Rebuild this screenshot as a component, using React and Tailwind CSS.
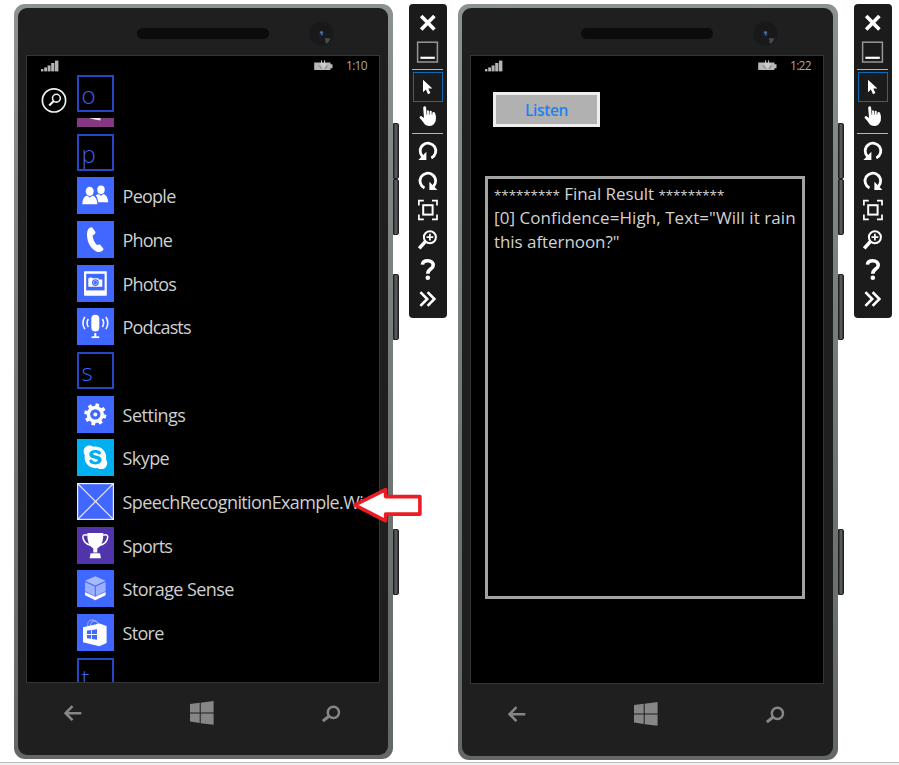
import React from "react";
import { FaSkype } from "react-icons/fa";

const BLUE = "#4067ff";

const icons = {
  people: (
    <g fill="#fff">
      <ellipse cx="24" cy="12.8" rx="3.7" ry="4.2" />
      <path d="M18.8 18.3 Q20.5 17 22 17.2 L24 18.8 L26.5 17 Q30.5 18 31.3 25.3 H21.2 Q20.8 20.5 18.8 18.3Z" />
      <ellipse cx="12.7" cy="14.3" rx="4" ry="4.6" />
      <path d="M5.3 27.3 Q5.6 19.5 10 18.6 L12.8 20.4 L15.6 18.6 Q20 19.5 20.3 27.3Z" />
    </g>
  ),
  phone: (
    <path fill="#fff" d="M11 8.5C12 6.8 14 6 15 6.2L18.5 11C18.7 12.5 17 14 15.6 14.5C15.8 18 17.5 21.5 20 24C21.5 23.3 22.5 23.3 23.2 23.7L26.6 28C26 30 23.5 31.3 21 31C15 29.5 10 22 10 14C10 12 10.2 10 11 8.5Z" />
  ),
  photos: (
    <g>
      <rect x="7" y="6.2" width="22.8" height="24.5" rx="0.8" fill="#fff" />
      <rect x="9.2" y="8.8" width="18.4" height="16.6" fill={BLUE} />
      <path d="M11.3 13.2H12.3V12.5H15V13.2H21.5V14.5H25.3V21.8H11.3Z" fill="#fff" />
      <circle cx="18.4" cy="17.6" r="3.4" fill={BLUE} />
      <circle cx="18.4" cy="17.6" r="2" fill="none" stroke="#b9c6ff" strokeWidth="0.8" />
    </g>
  ),
  podcasts: (
    <g fill="none" stroke="#fff" strokeWidth="1.5">
      <rect x="14.3" y="6.7" width="8" height="16.8" rx="4" fill="#fff" stroke="none" />
      <path d="M18.3 25V29" strokeWidth="2" />
      <path d="M14.6 29.2H22.2" strokeWidth="1.8" />
      <path d="M7.8 9Q4 15 7.8 21.2M11.3 11Q8.9 15 11.3 19.2M28.9 9Q32.7 15 28.9 21.2M25.4 11Q27.8 15 25.4 19.2" />
    </g>
  ),
  settings: (
    <g transform="translate(18.3 18.4)">
      <circle r="6.9" fill="none" stroke="#fff" strokeWidth="3.4" />
      <g fill="#fff">
        {[0, 45, 90, 135, 180, 225, 270, 315].map((a) => (
          <rect key={a} x="-1.9" y="-11" width="3.8" height="4" rx="0.6" transform={`rotate(${a + 12})`} />
        ))}
      </g>
      <circle r="2" fill="#fff" />
    </g>
  ),
  skype: <FaSkype x="4.9" y="4.8" size="27" color="#fff" />,
  speech: (
    <g fill="none" stroke="#e8ecff" strokeWidth="1.2">
      <path d="M0 0L37 37M37 0L0 37" />
      <rect x="0.6" y="0.6" width="35.8" height="35.8" />
    </g>
  ),
  sports: (
    <g fill="#fff">
      <path d="M10.3 6H26.3C26.3 14 25 18.5 20.3 21.5V25.5H16.3V21.5C11.6 18.5 10.3 14 10.3 6Z" />
      <path d="M13.6 26.3H23L24 31.2H12.6Z" />
      <path d="M10.5 8.2C7 7 5.4 8.2 6 11C7 15.5 10 17.5 13.5 18.2M26.1 8.2C29.6 7 31.2 8.2 30.6 11C29.6 15.5 26.6 17.5 23.1 18.2" fill="none" stroke="#fff" strokeWidth="1.5" />
    </g>
  ),
  storage: (
    <g>
      <path d="M18.3 6.3L28.6 10.8L18.3 15.5L8 10.8Z" fill="#a9b9ff" />
      <path d="M8 11.9L17.8 16.4V26L8 21.3Z" fill="#9db0ff" />
      <path d="M28.6 11.9L18.8 16.4V26L28.6 21.3Z" fill="#9db0ff" />
      <path d="M8 22L18.3 26.8L28.6 22V25.2L18.3 30.2L8 25.2Z" fill="#fff" />
    </g>
  ),
  store: (
    <g>
      <path d="M10.8 12C10 8 12.5 6 15 6C18 6 20.5 8 21 10.5M13.5 11.5C13.5 8.5 15.5 7 17.5 7C19.8 7 21.8 9 22 10.5" fill="none" stroke="#a9b9ff" strokeWidth="1" />
      <path d="M6 13.2L22.5 9.6L29.6 12V29L22.3 32.2L6 28.3Z" fill="#fff" />
      <path d="M10 16.6L14.2 16V20.1H10ZM15 15.9L20 15.2V20.1H15ZM10 20.9H14.2V24.8L10 24.3ZM15 20.9H20V25.7L15 25Z" fill={BLUE} />
    </g>
  ),
};

const rows = [
  { letter: "p" },
  { icon: "people", label: "People", cls: "tracking-[-0.75px]" },
  { icon: "phone", label: "Phone", cls: "tracking-[-0.9px]" },
  { icon: "photos", label: "Photos", cls: "tracking-[-0.85px]" },
  { icon: "podcasts", label: "Podcasts", cls: "tracking-[-0.85px]" },
  { letter: "s" },
  { icon: "settings", label: "Settings", cls: "tracking-[-0.5px]" },
  { icon: "skype", label: "Skype", bg: "bg-[#00aff0]", cls: "tracking-[-0.6px]" },
  { icon: "speech", label: "SpeechRecognitionExample.Wi", cls: "tracking-[-0.62px]" },
  { icon: "sports", label: "Sports", bg: "bg-[#5133ab]", cls: "tracking-[-0.75px]" },
  { icon: "storage", label: "Storage Sense", cls: "tracking-[-0.58px]" },
  { icon: "store", label: "Store", cls: "tracking-[-0.7px]" },
  { letter: "t" },
];

function LetterTile({ children }) {
  return (
    <div className="flex h-[37px] w-[37px] shrink-0 items-end border-2 border-[#2748c6] pb-[1px] pl-[3px] text-[24px] leading-[28px] font-light text-[#3a60f5]">
      {children}
    </div>
  );
}

function StatusBar({ time }) {
  return (
    <div className="flex h-[19px] shrink-0 items-center pr-[14px] pl-[14px]">
      <svg width="18" height="12" viewBox="0 0 18 12" fill="#b4b4b4">
        <rect x="0" y="9" width="2.4" height="2.4" />
        <rect x="3.2" y="7.4" width="2.8" height="4" />
        <rect x="6.6" y="5.4" width="3" height="6" />
        <rect x="10.2" y="3" width="3.2" height="8.4" />
        <rect x="14" y="0.6" width="3.4" height="10.8" />
      </svg>
      <svg className="mr-[13px] ml-auto" width="20" height="12" viewBox="0 0 20 12">
        <path d="M1.2 2.6H17.5V4.3H19.5V8.3H17.5V10H1.2Z" fill="#b8b8b8" />
        <path d="M6 5.5L8.6 8.5M12.4 8.8L14.2 5.5" stroke="#666" strokeWidth="0.8" />
        <path d="M8.6 0.3V3M11.6 0.3V3M7.5 3.5H12.8V5.5L10.2 8Z" stroke="#ccc" fill="#ccc" strokeWidth="1" />
      </svg>
      <span className="w-[19px] text-[12px] leading-[19px] tracking-[-0.7px] whitespace-nowrap text-[#a8a8a8]">{time}</span>
    </div>
  );
}

function SideButtons() {
  const b = "w-[6px] rounded-r-[2px] border border-[#202122] bg-linear-to-r from-[#2e2f31] via-[#67686c] to-[#2b2c2e]";
  return (
    <div className="flex w-[6px] flex-col">
      <div className={`mt-[119px] h-[56px] ${b}`} />
      <div className={`h-[56px] ${b}`} />
      <div className={`mt-[39px] h-[66px] ${b}`} />
      <div className={`mt-[189px] h-[66px] ${b}`} />
    </div>
  );
}

function Phone({ tall, time, children }) {
  return (
    <div className="flex">
      <div className={`flex flex-col rounded-[11px] bg-linear-to-b from-[#8b928f] via-[#747a77] to-[#636867] pt-[3.5px] pr-[5px] pb-[4px] pl-[4px] ${tall ? "h-[756px] w-[380px]" : "h-[755px] w-[379px]"}`}>
        <div className="flex min-h-0 flex-1 flex-col rounded-[9px] bg-[#1f1f1f]">
          <div className="flex h-[47.5px] shrink-0 items-center pt-[5px] pl-[119px]">
            <div className="h-[11px] w-[132px] rounded-full bg-[#0c0c0c]" />
            <svg className="ml-[40px]" width="25" height="25" viewBox="0 0 25 25">
              <circle cx="12.5" cy="12.5" r="12" fill="#18191b" />
              <path d="M16 17L21.5 17.5Q20 21.5 17 23Z" fill="#4b4c4e" />
              <circle cx="12.5" cy="12.5" r="3" fill="#172338" />
              <circle cx="12.5" cy="11.6" r="1.4" fill="#5f74b0" />
              <circle cx="12.8" cy="13.4" r="0.9" fill="#2b7a80" />
            </svg>
          </div>
          <div className={`ml-[8px] flex w-[354px] shrink-0 flex-col overflow-hidden border border-[#353535] bg-black ${tall ? "h-[629px]" : "h-[628px]"}`}>
            <StatusBar time={time} />
            {children}
          </div>
          <div className="flex h-[60px] shrink-0 items-center pl-[45.5px] text-[#868686]">
            <svg width="18" height="17" viewBox="0 0 18 17" fill="none" stroke="currentColor" strokeWidth="2.6">
              <path d="M17.3 8.2H2M8.5 1.2L1.6 8.2L8.5 15.2" />
            </svg>
            <svg className="ml-[108px]" width="24" height="24" viewBox="0 0 24 24" fill="currentColor">
              <path d="M0 3L9.7 1.8V11.5H0ZM10.7 1.7L23.6 0V11.5H10.7ZM0 12.5H9.7V22.1L0 20.6ZM10.7 12.5H23.6V23.8L10.7 22.2Z" />
            </svg>
            <svg className="ml-[107px]" width="20" height="19" viewBox="0 0 20 19" fill="none" stroke="currentColor" strokeWidth="2.4">
              <circle cx="12.4" cy="8.4" r="5.6" />
              <path d="M8.2 12L1.8 17.2" strokeWidth="3" />
            </svg>
          </div>
        </div>
      </div>
      <SideButtons />
    </div>
  );
}

function ToolCell({ children, active }) {
  return (
    <div className={`flex h-[29.6px] w-[30px] shrink-0 items-center justify-center ${active ? "border border-[#0b6cb4]" : ""}`}>
      <svg className="shrink-0" width="30" height="30" viewBox="0 0 30 30" fill="none" stroke="#fff">
        {children}
      </svg>
    </div>
  );
}

function Toolbar() {
  return (
    <div className="flex h-[314px] w-[37.5px] flex-col items-center rounded-[4px] bg-[#1b1b1b] pt-[4px]">
      <ToolCell><path d="M8.2 8L21.4 21.6M21.4 8L8.2 21.6" strokeWidth="3.6" /></ToolCell>
      <ToolCell>
        <rect x="4.6" y="5.2" width="19.8" height="19.8" stroke="#979797" strokeWidth="1.5" />
        <path d="M7.4 20.8H21.8" strokeWidth="2.2" />
      </ToolCell>
      <div className="mt-[1.5px] mb-[2.4px] h-px w-[31px] bg-[#b5b5b5]" />
      <ToolCell active>
        <path d="M10 7.8V20.2L12.9 17.6L15 22.2L17.4 21.1L15.3 16.6H19.4Z" fill="#fff" stroke="none" />
      </ToolCell>
      <ToolCell>
        <path d="M11 4.8Q12.8 4.2 13.1 6L13.7 11.5L14 9Q15.2 8.2 16 9.3L16.3 11L16.8 9.2Q18.2 8.6 18.8 9.8L19 11.5L19.8 10.2Q21.6 10 22.2 11.6L23 15Q23.5 19 21 22.2Q19.5 24.3 16.5 24.3Q12.5 24.3 11 21.6Q9 18.2 6.6 16.2Q6.2 14.4 8.2 14.4L11 16.2L10.2 6Q10.2 5 11 4.8Z" fill="#fff" stroke="none" transform="translate(0 0.7)" />
        <path d="M13.7 10.2V13.7M16.4 10.5V13.7M19 11.2V13.7" stroke="#1b1b1b" strokeWidth="0.6" />
      </ToolCell>
      <div className="mt-[1.8px] mb-[2.3px] h-px w-[31px] bg-[#b5b5b5]" />
      <ToolCell>
        <path d="M18.3 22A7.8 7.8 0 1 0 9.4 20.4" strokeWidth="2.8" />
        <path d="M13.4 15.8V24H5.4Z" fill="#fff" stroke="none" />
      </ToolCell>
      <ToolCell>
        <path d="M11.5 22A7.8 7.8 0 1 1 20.4 20.4" strokeWidth="2.8" />
        <path d="M16.4 15.8V24H24.4Z" fill="#fff" stroke="none" />
      </ToolCell>
      <ToolCell>
        <path d="M5.9 10.5V5.6H10.8M19 5.6H24V10.5M24 19.4V24.3H19M10.8 24.3H5.9V19.4" strokeWidth="1.7" />
        <rect x="10.2" y="10.2" width="9.4" height="9.4" strokeWidth="2" />
      </ToolCell>
      <ToolCell>
        <circle cx="16.9" cy="12.2" r="6" strokeWidth="2" />
        <path d="M16.9 8.8V15.6M13.5 12.2H20.3" strokeWidth="1.7" />
        <path d="M12.3 16.6L6.2 23.4" strokeWidth="3.6" />
      </ToolCell>
      <ToolCell>
        <path d="M9.4 9.6C9.8 6.4 12 5.8 14.8 5.8C18.2 5.8 20.2 7.6 20.2 10.2C20.2 14.4 14.8 13.8 14.8 18.8" strokeWidth="3.6" />
        <circle cx="14.8" cy="22.8" r="2.3" fill="#fff" stroke="none" />
      </ToolCell>
      <ToolCell>
        <path d="M7.4 8.2L14.2 15L7.4 21.8M14.6 8.2L21.4 15L14.6 21.8" strokeWidth="2.6" />
      </ToolCell>
    </div>
  );
}

function AppList() {
  return (
    <div className="flex min-h-0 flex-1">
      <div className="w-[49.6px] shrink-0 pt-[12px] pl-[14px]">
        <svg width="27" height="27" viewBox="0 0 27 27" fill="none" stroke="#f0f0f0">
          <circle cx="13" cy="13.4" r="11.6" strokeWidth="1.7" />
          <circle cx="15.4" cy="11.2" r="3.9" strokeWidth="1.6" />
          <path d="M12.5 14.2L8.2 18.6" strokeWidth="2.2" />
        </svg>
      </div>
      <div className="flex flex-col">
        <LetterTile>o</LetterTile>
        <div className="mt-[6px] mb-[6.8px] flex h-[9px] w-[37px] shrink-0 justify-center bg-[#83387f]">
          <svg width="12" height="3" viewBox="0 0 12 3"><path d="M0 0H11.5V2.4Q5 2 0 0Z" fill="#efe3ef" /></svg>
        </div>
        <div className="flex flex-col gap-[6.67px]">
          {rows.map((r, i) =>
            r.letter ? (
              <LetterTile key={i}>{r.letter}</LetterTile>
            ) : (
              <div key={i} className="flex h-[37px] shrink-0 items-center gap-[9px]">
                <div className={`h-[37px] w-[37px] shrink-0 ${r.bg || "bg-[#4067ff]"}`}>
                  <svg width="37" height="37" viewBox="0 0 37 37">{icons[r.icon]}</svg>
                </div>
                <span className={`pt-px text-[18px] leading-[24px] whitespace-nowrap text-[#cfcfcf] ${r.cls}`}>{r.label}</span>
              </div>
            )
          )}
        </div>
      </div>
    </div>
  );
}

function Stars() {
  return <span className="text-[13.4px] leading-[20px]">*********</span>;
}

function SpeechApp() {
  return (
    <div className="flex flex-1 flex-col">
      <button className="mt-[17px] ml-[22px] h-[35px] w-[107px] border-[3px] border-[#eeeeee] bg-[#b1b1b1] pt-px text-[15.5px] leading-[20px] font-semibold tracking-[-0.35px] text-[#1f82ee]">
        Listen
      </button>
      <div className="mt-[49px] ml-[14px] h-[423px] w-[320px] border-[3px] border-[#a3a3a3] pt-[3px] pl-[6px] text-[17px] leading-[24px] tracking-[-0.06px] whitespace-nowrap text-[#d2d2d2]">
        <div className="h-[24px]">
          <Stars /> Final Result <Stars />
        </div>
        <div className="tracking-[0.07px]">[0] Confidence=High, Text="Will it rain</div>
        <div>this afternoon?"</div>
      </div>
    </div>
  );
}

export default function App() {
  return (
    <div className="relative flex h-[765px] w-[899px] flex-col overflow-hidden bg-white font-['Open_Sans','Noto_Sans',sans-serif]">
      <div className="flex h-[762px] shrink-0 items-start pt-[4px] pl-[14px]">
        <Phone time="1:10"><AppList /></Phone>
        <div className="ml-[10px]"><Toolbar /></div>
        <div className="ml-[11.5px]"><Phone tall time="1:22"><SpeechApp /></Phone></div>
        <div className="ml-[10px]"><Toolbar /></div>
      </div>
      <div className="h-[3px] border-t border-[#bdbdbd] bg-[#f1f1f1]" />
      <svg className="absolute top-[485px] left-[350px]" width="74" height="40" viewBox="350 485 74 40">
        <path d="M354.8 505L385.6 489.6V496.6H419.9V514.1H385.6V520.8Z" fill="#fff" stroke="#ec1c24" strokeWidth="3.6" strokeLinejoin="round" />
      </svg>
    </div>
  );
}
